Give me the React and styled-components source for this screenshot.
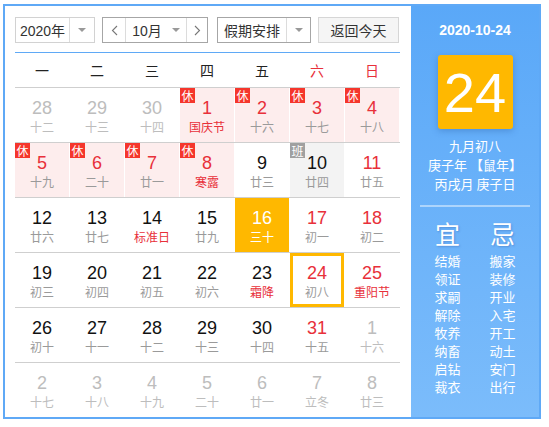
import React from "react";
import styled, { createGlobalStyle } from "styled-components";

const Global = createGlobalStyle`
  html, body { margin: 0; padding: 0; background: #fff; }
  body { font-family: "Liberation Sans", "Noto Sans CJK SC", sans-serif; }
`;

const Page = styled.div`
  padding: 4px 0 0 3px;
`;

const Box = styled.div`
  box-sizing: border-box;
  width: 538px;
  height: 415px;
  border: 2px solid #5fa9f6;
  display: flex;
  overflow: hidden;
`;

const Left = styled.div`
  width: 406px;
  box-sizing: border-box;
  padding: 11px 0 0 10px;
  flex: none;
`;

const Toolbar = styled.div`
  display: flex;
  width: 385px;
  height: 26px;
  padding-bottom: 9px;
  border-bottom: 1px solid #5fa9f6;
  font-size: 14px;
  color: #333;
`;

const Select = styled.div`
  box-sizing: border-box;
  display: flex;
  height: 26px;
  width: ${(p) => p.$w}px;
  margin-right: ${(p) => p.$mr || 0}px;
  border: 1px solid ${(p) => (p.$dark ? "#a6a6a6" : "#d2d2d2")};
  background: #fff;
`;

const Part = styled.div`
  box-sizing: border-box;
  display: flex;
  align-items: center;
  justify-content: center;
  width: ${(p) => (p.$w ? `${p.$w}px` : "auto")};
  flex: ${(p) => (p.$w ? "none" : "1")};
  border-left: ${(p) => (p.$div ? "1px solid #dcdcdc" : "none")};
  color: #333;
  gap: 10px;
`;

const Tri = styled.span`
  width: 0;
  height: 0;
  border-left: 4px solid transparent;
  border-right: 4px solid transparent;
  border-top: 4px solid #999;
`;

const Button = styled.div`
  box-sizing: border-box;
  width: 81px;
  height: 26px;
  border: 1px solid #d6d6d6;
  background: #f5f5f5;
  display: flex;
  align-items: center;
  justify-content: center;
  color: #333;
`;

const Week = styled.div`
  display: grid;
  grid-template-columns: repeat(7, 54px);
  column-gap: 1px;
  width: 385px;
  height: 34px;
  align-items: center;
  border-bottom: 1px solid #cfcfcf;
  font-family: "Noto Sans CJK SC", sans-serif;
  font-size: 14px;
`;

const WeekDay = styled.div`
  text-align: center;
  color: ${(p) => (p.$red ? "#e8303a" : "#222")};
  margin-top: -1px;
`;

const Row = styled.div`
  display: grid;
  grid-template-columns: repeat(7, 54px);
  column-gap: 1px;
  width: 385px;
  height: 54px;
  border-bottom: ${(p) => (p.$last ? "none" : "1px solid #cfcfcf")};
`;

const Cell = styled.div`
  position: relative;
  box-sizing: border-box;
  height: 54px;
  display: flex;
  flex-direction: column;
  align-items: center;
  padding-top: ${(p) => (p.$sel ? 6 : 9)}px;
  background: ${(p) =>
    p.$today ? "#ffb800" : p.$hol ? "#fdeded" : p.$work ? "#f3f3f3" : "#fff"};
  border: ${(p) => (p.$sel ? "3px solid #ffb800" : "none")};
`;

const Num = styled.div`
  font-size: 18px;
  line-height: 22px;
  color: ${(p) => p.$c};
`;

const Lunar = styled.div`
  font-family: "Noto Sans CJK SC", sans-serif;
  font-size: 12px;
  line-height: 16px;
  color: ${(p) => p.$c};
`;

const Badge = styled.span`
  position: absolute;
  left: 0;
  top: 0;
  width: 15px;
  height: 15px;
  background: ${(p) => (p.$work ? "#a0a0a0" : "#f5362c")};
  color: #fff;
  font-family: "Noto Sans CJK SC", sans-serif;
  font-size: 12px;
  line-height: 15px;
  text-align: center;
`;

const Right = styled.div`
  flex: 1;
  background: linear-gradient(#5aa8f8, #7bbcfb);
  display: flex;
  flex-direction: column;
  align-items: center;
  color: #fff;
  font-family: "Noto Sans CJK SC", sans-serif;
  padding-top: 15px;
`;

const DateText = styled.div`
  font-family: "Liberation Sans", sans-serif;
  font-size: 14px;
  font-weight: bold;
  line-height: 18px;
`;

const BigDay = styled.div`
  margin-top: 16px;
  width: 75px;
  height: 74px;
  border-radius: 3px;
  background: #ffb800;
  box-shadow: 0 2px 6px rgba(40, 90, 160, 0.35);
  display: flex;
  align-items: center;
  justify-content: center;
  font-family: "Liberation Sans", sans-serif;
  font-size: 56px;
  color: #fff;
`;

const Info = styled.div`
  margin-top: 7px;
  font-size: 13px;
  line-height: 19px;
  text-align: center;
`;

const Sep = styled.div`
  margin-top: 12px;
  width: 110px;
  height: 2px;
  background: rgba(255, 255, 255, 0.45);
`;

const YiJi = styled.div`
  display: flex;
  gap: 15px;
  margin-top: 11px;
`;

const Col = styled.div`
  width: 40px;
  display: flex;
  flex-direction: column;
  align-items: center;
`;

const Head = styled.div`
  font-size: 25px;
  line-height: 30px;
  margin-bottom: 4px;
  text-shadow: 1px 1px 2px rgba(40, 80, 160, 0.35);
`;

const Item = styled.div`
  font-size: 13px;
  line-height: 18px;
`;

const RED = "#e8303a";
const GRAY = "#bdbdbd";
const BLACK = "#111";
const LG = "#9a9a9a";

// [num, lunar, numColor, lunarColor, flags]
const rows = [
  [
    ["28", "十二", GRAY, GRAY],
    ["29", "十三", GRAY, GRAY],
    ["30", "十四", GRAY, GRAY],
    ["1", "国庆节", RED, RED, { hol: 1 }],
    ["2", "十六", RED, LG, { hol: 1 }],
    ["3", "十七", RED, LG, { hol: 1 }],
    ["4", "十八", RED, LG, { hol: 1 }],
  ],
  [
    ["5", "十九", RED, LG, { hol: 1 }],
    ["6", "二十", RED, LG, { hol: 1 }],
    ["7", "廿一", RED, LG, { hol: 1 }],
    ["8", "寒露", RED, RED, { hol: 1 }],
    ["9", "廿三", BLACK, LG],
    ["10", "廿四", BLACK, LG, { work: 1 }],
    ["11", "廿五", RED, LG],
  ],
  [
    ["12", "廿六", BLACK, LG],
    ["13", "廿七", BLACK, LG],
    ["14", "标准日", BLACK, RED],
    ["15", "廿九", BLACK, LG],
    ["16", "三十", "#fff", "#fff", { today: 1 }],
    ["17", "初一", RED, LG],
    ["18", "初二", RED, LG],
  ],
  [
    ["19", "初三", BLACK, LG],
    ["20", "初四", BLACK, LG],
    ["21", "初五", BLACK, LG],
    ["22", "初六", BLACK, LG],
    ["23", "霜降", BLACK, RED],
    ["24", "初八", RED, LG, { sel: 1 }],
    ["25", "重阳节", RED, RED],
  ],
  [
    ["26", "初十", BLACK, LG],
    ["27", "十一", BLACK, LG],
    ["28", "十二", BLACK, LG],
    ["29", "十三", BLACK, LG],
    ["30", "十四", BLACK, LG],
    ["31", "十五", RED, LG],
    ["1", "十六", GRAY, GRAY],
  ],
  [
    ["2", "十七", GRAY, GRAY],
    ["3", "十八", GRAY, GRAY],
    ["4", "十九", GRAY, GRAY],
    ["5", "二十", GRAY, GRAY],
    ["6", "廿一", GRAY, GRAY],
    ["7", "立冬", GRAY, GRAY],
    ["8", "廿三", GRAY, GRAY],
  ],
];

const yi = ["结婚", "领证", "求嗣", "解除", "牧养", "纳畜", "启钻", "裁衣"];
const ji = ["搬家", "装修", "开业", "入宅", "开工", "动土", "安门", "出行"];

const Chev = ({ dir }) => (
  <svg width="7" height="11" viewBox="0 0 7 11">
    <path
      d={dir === "l" ? "M6 1 L1.5 5.5 L6 10" : "M1 1 L5.5 5.5 L1 10"}
      fill="none"
      stroke="#777"
      strokeWidth="1.1"
    />
  </svg>
);

export default function App() {
  return (
    <Page>
      <Global />
      <Box>
        <Left>
          <Toolbar>
            <Select $w={80} $mr={7}>
              <Part>2020年</Part>
              <Part $w={25} $div>
                <Tri />
              </Part>
            </Select>
            <Select $w={106} $mr={9} $dark>
              <Part $w={22}>
                <Chev dir="l" />
              </Part>
              <Part $div>
                10月
                <Tri />
              </Part>
              <Part $w={21} $div>
                <Chev dir="r" />
              </Part>
            </Select>
            <Select $w={94} $mr={7} $dark>
              <Part>假期安排</Part>
              <Part $w={24} $div>
                <Tri />
              </Part>
            </Select>
            <Button>返回今天</Button>
          </Toolbar>
          <Week>
            {["一", "二", "三", "四", "五", "六", "日"].map((d, i) => (
              <WeekDay key={d} $red={i >= 5}>
                {d}
              </WeekDay>
            ))}
          </Week>
          {rows.map((r, ri) => (
            <Row key={ri} $last={ri === rows.length - 1}>
              {r.map(([n, l, nc, lc, f = {}], ci) => (
                <Cell
                  key={ci}
                  $hol={f.hol}
                  $work={f.work}
                  $today={f.today}
                  $sel={f.sel}
                >
                  {f.hol && <Badge>休</Badge>}
                  {f.work && <Badge $work>班</Badge>}
                  <Num $c={nc}>{n}</Num>
                  <Lunar $c={lc}>{l}</Lunar>
                </Cell>
              ))}
            </Row>
          ))}
        </Left>
        <Right>
          <DateText>2020-10-24</DateText>
          <BigDay>24</BigDay>
          <Info>
            九月初八
            <br />
            庚子年 【鼠年】
            <br />
            丙戌月 庚子日
          </Info>
          <Sep />
          <YiJi>
            <Col>
              <Head>宜</Head>
              {yi.map((t) => (
                <Item key={t}>{t}</Item>
              ))}
            </Col>
            <Col>
              <Head>忌</Head>
              {ji.map((t) => (
                <Item key={t}>{t}</Item>
              ))}
            </Col>
          </YiJi>
        </Right>
      </Box>
    </Page>
  );
}
